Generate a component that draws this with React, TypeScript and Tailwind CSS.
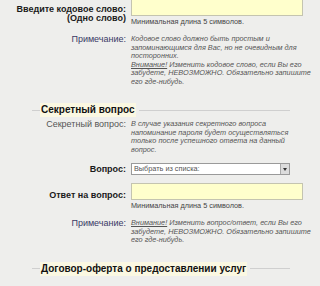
import React from "react";

const Note = ({ children }: { children: React.ReactNode }) => (
  <div className="text-[7.3px] leading-[8.5px] italic text-[#555] whitespace-nowrap">{children}</div>
);

const Legend = ({ text, mt }: { text: string; mt: string }) => (
  <div className={`flex items-center pl-[32px] w-[290px] ${mt}`}>
    <div className="w-[8px] h-px bg-[#cfcfcf]" />
    <span className="bg-[#fbf8e2] px-[1px] text-[10px] leading-[14px] font-bold text-[#111] whitespace-nowrap">
      {text}
    </span>
    <div className="flex-1 ml-[3px] h-px bg-[#cfcfcf]" />
  </div>
);

export default function App() {
  return (
    <div className="w-[320px] h-[286px] overflow-hidden bg-[#eeeeec] font-['Liberation_Sans',Arial,sans-serif]">
      {/* Row 1 */}
      <div className="flex items-start mt-[-1px]">
        <div className="w-[126px] text-right font-bold text-[9px] leading-[9px] pt-[6px] text-[#1a1a1a]">
          Введите кодовое слово:
          <br />
          (Одно слово)
        </div>
        <div className="ml-[5px] flex flex-col">
          <div className="w-[172px] h-[17px] bg-[#ffffcc] border border-[#c4c4b0]" />
          <div className="text-[7.3px] leading-[9px] mt-[1px] text-[#444] whitespace-nowrap">Минимальная длина 5 символов.</div>
        </div>
      </div>

      {/* Note 1 */}
      <div className="flex items-start mt-[9px]">
        <div className="w-[126px] text-right text-[9px] leading-[8.5px] text-[#3a3a66]">Примечание:</div>
        <div className="ml-[5px] w-[185px]">
          <Note>
            Кодовое слово должно быть простым и<br />
            запоминающимся для Вас, но не очевидным для<br />
            посторонних.<br />
            <span className="underline">Внимание!</span> Изменить кодовое слово, если Вы его<br />
            забудете, НЕВОЗМОЖНО. Обязательно запишите<br />
            его где-нибудь.
          </Note>
        </div>
      </div>

      <Legend text="Секретный вопрос" mt="mt-[17px]" />

      {/* Secret question note */}
      <div className="flex items-start mt-[3px]">
        <div className="w-[126px] text-right text-[9px] leading-[8.5px] text-[#555]">Секретный вопрос:</div>
        <div className="ml-[5px] w-[185px]">
          <Note>
            В случае указания секретного вопроса<br />
            напоминание пароля будет осуществляться<br />
            только после успешного ответа на данный<br />
            вопрос.
          </Note>
        </div>
      </div>

      {/* Select row */}
      <div className="flex items-center mt-[9px]">
        <div className="w-[126px] text-right font-bold text-[9px] leading-[12px] text-[#1a1a1a]">Вопрос:</div>
        <div className="ml-[5px] w-[159px] h-[12px] bg-white border border-[#9a9a9a] flex items-center justify-between">
          <span className="pl-[2px] text-[7.3px] leading-[10px] text-[#555]">Выбрать из списка:</span>
          <div className="w-[9px] h-[10px] bg-[#dcdcdc] border-l border-[#aaa] flex items-center justify-center">
            <div className="w-0 h-0 border-l-[2.5px] border-r-[2.5px] border-t-[3px] border-l-transparent border-r-transparent border-t-[#333]" />
          </div>
        </div>
      </div>

      {/* Answer row */}
      <div className="flex items-start mt-[8px]">
        <div className="w-[126px] text-right font-bold text-[9px] leading-[9px] pt-[8px] text-[#1a1a1a]">Ответ на вопрос:</div>
        <div className="ml-[5px] flex flex-col">
          <div className="w-[172px] h-[17px] bg-[#ffffcc] border border-[#c4c4b0]" />
          <div className="text-[7.3px] leading-[9px] mt-[1px] text-[#444] whitespace-nowrap">Минимальная длина 5 символов.</div>
        </div>
      </div>

      {/* Note 2 */}
      <div className="flex items-start mt-[9px]">
        <div className="w-[126px] text-right text-[9px] leading-[8.5px] text-[#3a3a66]">Примечание:</div>
        <div className="ml-[5px] w-[185px]">
          <Note>
            <span className="underline">Внимание!</span> Изменить вопрос/ответ, если Вы его<br />
            забудете, НЕВОЗМОЖНО. Обязательно запишите<br />
            его где-нибудь.
          </Note>
        </div>
      </div>

      <Legend text="Договор-оферта о предоставлении услуг" mt="mt-[17px]" />
    </div>
  );
}
